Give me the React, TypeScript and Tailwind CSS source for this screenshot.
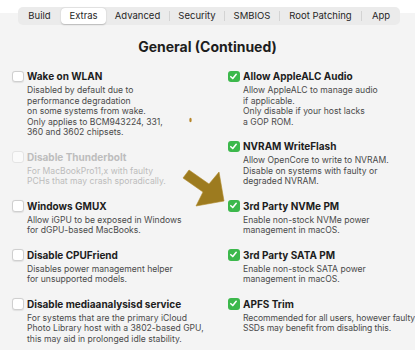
import React from "react";

type Item = { title: string; desc: string[]; checked?: boolean; disabled?: boolean; tight?: boolean };

const left: Item[] = [
  {
    title: "Wake on WLAN",
    desc: [
      "Disabled by default due to",
      "performance degradation",
      "on some systems from wake.",
      "Only applies to BCM943224, 331,",
      "360 and 3602 chipsets.",
    ],
  },
  {
    title: "Disable Thunderbolt",
    desc: ["For MacBookPro11,x with faulty", "PCHs that may crash sporadically."],
    disabled: true,
  },
  { title: "Windows GMUX", desc: ["Allow iGPU to be exposed in Windows", "for dGPU-based MacBooks."] },
  { title: "Disable CPUFriend", desc: ["Disables power management helper", "for unsupported models."] },
  {
    title: "Disable mediaanalysisd service",
    desc: [
      "For systems that are the primary iCloud",
      "Photo Library host with a 3802-based GPU,",
      "this may aid in prolonged idle stability.",
    ],
  },
];

const right: Item[] = [
  {
    title: "Allow AppleALC Audio",
    desc: ["Allow AppleALC to manage audio", "if applicable.", "Only disable if your host lacks", "a GOP ROM."],
    checked: true,
  },
  {
    title: "NVRAM WriteFlash",
    desc: ["Allow OpenCore to write to NVRAM.", "Disable on systems with faulty or", "degraded NVRAM."],
    checked: true,
  },
  { title: "3rd Party NVMe PM", desc: ["Enable non-stock NVMe power", "management in macOS."], checked: true },
  { title: "3rd Party SATA PM", desc: ["Enable non-stock SATA power", "management in macOS."], checked: true },
  {
    title: "APFS Trim",
    desc: ["Recommended for all users, however faulty", "SSDs may benefit from disabling this."],
    checked: true,
    tight: true,
  },
];

function Box({ checked, disabled }: { checked?: boolean; disabled?: boolean }) {
  if (checked) {
    return (
      <div className="mt-[1.5px] w-[11.5px] h-[11.5px] shrink-0 rounded-[3px] bg-[#3cb84c] flex items-center justify-center">
        <svg width="9" height="9" viewBox="0 0 10 10">
          <path d="M2 5.2 L4.2 7.3 L8 2.6" fill="none" stroke="#fff" strokeWidth="1.7" strokeLinecap="round" strokeLinejoin="round" />
        </svg>
      </div>
    );
  }
  return (
    <div
      className={
        disabled
          ? "mt-[1.5px] w-[11.5px] h-[11.5px] shrink-0 rounded-[3px] bg-[#fafafa] border border-[#e4e4e4]"
          : "mt-[1.5px] w-[11.5px] h-[11.5px] shrink-0 rounded-[3px] bg-white border border-[#cfcfcf] shadow-[0_0.5px_1px_rgba(0,0,0,0.08)]"
      }
    />
  );
}

function Option({ item }: { item: Item }) {
  return (
    <div className="flex gap-[3.5px]">
      <Box checked={item.checked} disabled={item.disabled} />
      <div className="flex flex-col">
        <div
          className={
            "text-[10px] leading-[14px] font-bold whitespace-nowrap " +
            (item.disabled ? "text-[#bdbdbd]" : "text-[#1d1d1d]")
          }
        >
          {item.title}
        </div>
        <div
          className={
            "mt-[2px] text-[8.6px] leading-[10.5px] whitespace-nowrap " +
            (item.tight ? "tracking-[-0.1px] " : "") +
            (item.disabled ? "text-[#bcbcbc]" : "text-[#4a4a4a]")
          }
        >
          {item.desc.map((d, i) => (
            <div key={i}>{d}</div>
          ))}
        </div>
      </div>
    </div>
  );
}

const tabs: { label: string; w: string; sel?: boolean; sep?: boolean }[] = [
  { label: "Build", w: "w-[43px]" },
  { label: "Extras", w: "w-[45px]", sel: true },
  { label: "Advanced", w: "w-[63px]" },
  { label: "Security", w: "w-[54px]", sep: true },
  { label: "SMBIOS", w: "w-[54px]", sep: true },
  { label: "Root Patching", w: "w-[81px]", sep: true },
  { label: "App", w: "w-[38px]", sep: true },
];

export default function App() {
  return (
    <div
      className="relative w-[415px] h-[350px] overflow-hidden bg-[linear-gradient(to_bottom,#ffffff_0px,#ffffff_13px,#f4f4f4_13px)] pt-[7px]"
      style={{ fontFamily: 'Inter, "Liberation Sans", Arial, sans-serif' }}
    >
      <div className="ml-[18px] w-[382px] h-[18px] rounded-[5px] bg-[#ebebeb] flex items-center text-[9.5px] text-[#262626]">
        {tabs.map((t) => (
          <React.Fragment key={t.label}>
            {t.sep && <div className="w-px h-[10px] bg-[#d3d3d3] shrink-0" />}
            <div
              className={
                t.w +
                " h-[16px] shrink-0 flex items-center justify-center whitespace-nowrap " +
                (t.sel ? "bg-white rounded-[4px] shadow-[0_0.5px_1.5px_rgba(0,0,0,0.22)]" : "")
              }
            >
              {t.label}
            </div>
          </React.Fragment>
        ))}
      </div>

      <div className="mt-[13px] text-center text-[14px] leading-[18px] font-bold text-[#1d1d1d]">
        General (Continued)
      </div>

      <div className="mt-[13px] px-[12px] grid grid-cols-[216px_1fr]">
        <div className="flex flex-col gap-[12px]">
          {left.map((it) => (
            <Option key={it.title} item={it} />
          ))}
        </div>
        <div className="flex flex-col gap-[12px]">
          {right.map((it) => (
            <Option key={it.title} item={it} />
          ))}
        </div>
      </div>

      <svg className="absolute left-0 top-0 pointer-events-none" width="415" height="350" viewBox="0 0 415 350">
        <ellipse cx="190.5" cy="120" rx="1.2" ry="2.2" fill="#b8862a" />
        <polygon
          points="189,170 209,184 219,172 224,201 196,206 203,192 183,178"
          fill="#9d7b1f"
          stroke="#b08a2a"
          strokeWidth="0.6"
          strokeLinejoin="round"
        />
      </svg>
    </div>
  );
}
